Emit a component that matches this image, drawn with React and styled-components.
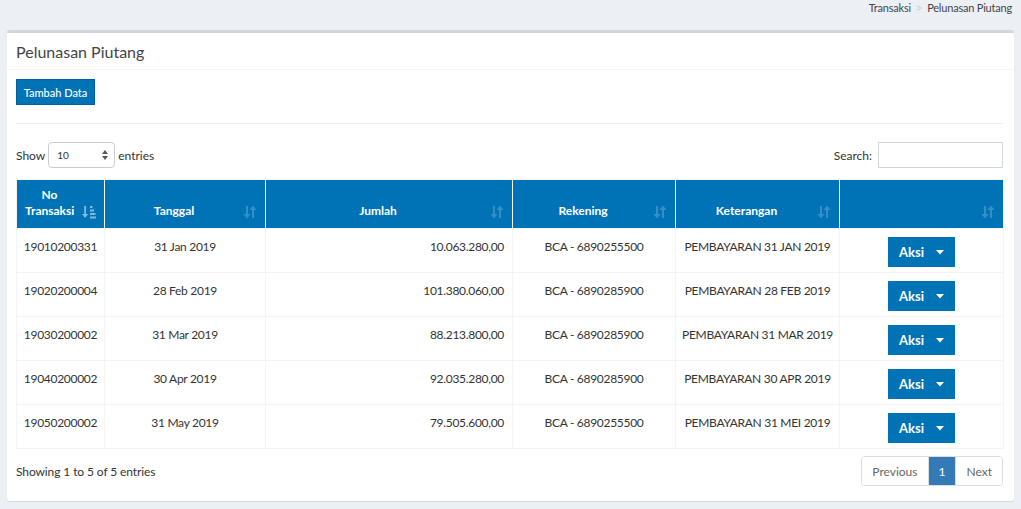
import React from 'react';
import styled, { createGlobalStyle } from 'styled-components';

const GlobalStyle = createGlobalStyle`
  html, body {
    margin: 0;
    padding: 0;
    background: #ecf0f5;
    font-family: Lato, "Noto Sans", sans-serif;
    font-size: 13px;
    color: #333;
  }
  * { box-sizing: border-box; }
`;

const rows = [
  { no: '19010200331', tanggal: '31 Jan 2019', jumlah: '10.063.280,00', rekening: 'BCA - 6890255500', ket: 'PEMBAYARAN 31 JAN 2019' },
  { no: '19020200004', tanggal: '28 Feb 2019', jumlah: '101.380.060,00', rekening: 'BCA - 6890285900', ket: 'PEMBAYARAN 28 FEB 2019' },
  { no: '19030200002', tanggal: '31 Mar 2019', jumlah: '88.213.800,00', rekening: 'BCA - 6890285900', ket: 'PEMBAYARAN 31 MAR 2019' },
  { no: '19040200002', tanggal: '30 Apr 2019', jumlah: '92.035.280,00', rekening: 'BCA - 6890285900', ket: 'PEMBAYARAN 30 APR 2019' },
  { no: '19050200002', tanggal: '31 May 2019', jumlah: '79.505.600,00', rekening: 'BCA - 6890255500', ket: 'PEMBAYARAN 31 MEI 2019' },
];

const columns = [
  { label: 'No Transaksi', width: 88, sorted: true },
  { label: 'Tanggal', width: 161 },
  { label: 'Jumlah', width: 247 },
  { label: 'Rekening', width: 163 },
  { label: 'Keterangan', width: 164 },
  { label: '', width: 164 },
];

const SortIcon = ({ sorted }) => (
  <SortMark sorted={sorted}>
    {sorted ? (
      <svg width="14" height="14" viewBox="0 0 14 14" fill="#fff">
        <rect x="2.2" y="1" width="1.8" height="9" />
        <path d="M0 9h6.2l-3.1 4z" />
        <rect x="8" y="1" width="2.5" height="2" />
        <rect x="8" y="4.5" width="4" height="2" />
        <rect x="8" y="8" width="5.5" height="2" />
        <rect x="8" y="11.5" width="6" height="2" />
      </svg>
    ) : (
      <svg width="14" height="14" viewBox="0 0 14 14" fill="#fff">
        <rect x="3" y="1" width="2" height="9" />
        <path d="M0.5 9h7l-3.5 4.5z" />
        <rect x="9" y="4" width="2" height="9" />
        <path d="M6.5 5h7l-3.5-4.5z" />
      </svg>
    )}
  </SortMark>
);

const Caret = () => (
  <svg width="8" height="5" viewBox="0 0 8 5" fill="#fff">
    <path d="M0 0h8L4 4.5z" />
  </svg>
);

const SelectArrows = () => (
  <svg width="6" height="10" viewBox="0 0 6 10" fill="#555">
    <path d="M3 0l3 4H0z" />
    <path d="M3 10l3-4H0z" />
  </svg>
);

export default function App() {
  return (
    <Page>
      <GlobalStyle />
      <Breadcrumb>
        <span>Transaksi</span>
        <Sep>&gt;</Sep>
        <span>Pelunasan Piutang</span>
      </Breadcrumb>
      <Box>
        <BoxHeader>
          <BoxTitle>Pelunasan Piutang</BoxTitle>
        </BoxHeader>
        <BoxBody>
          <PrimaryButton>Tambah Data</PrimaryButton>
          <Rule />
          <Controls>
            <Label>
              Show
              <Select>
                <span>10</span>
                <SelectArrows />
              </Select>
              entries
            </Label>
            <Label>
              Search:
              <SearchInput />
            </Label>
          </Controls>
          <Table>
            <colgroup>
              {columns.map((c, i) => (
                <col key={i} style={{ width: c.width }} />
              ))}
            </colgroup>
            <thead>
              <tr>
                {columns.map((c, i) => (
                  <Th key={i}>
                    {c.label === 'No Transaksi' ? (
                      <>No<br />Transaksi</>
                    ) : (
                      c.label
                    )}
                    <SortIcon sorted={c.sorted} />
                  </Th>
                ))}
              </tr>
            </thead>
            <tbody>
              {rows.map((r) => (
                <tr key={r.no}>
                  <Td>{r.no}</Td>
                  <Td>{r.tanggal}</Td>
                  <Td align="right">{r.jumlah}</Td>
                  <Td>{r.rekening}</Td>
                  <Td>{r.ket}</Td>
                  <Td>
                    <ActionButton>
                      <span>Aksi</span>
                      <Caret />
                    </ActionButton>
                  </Td>
                </tr>
              ))}
            </tbody>
          </Table>
          <Footer>
            <Info>Showing 1 to 5 of 5 entries</Info>
            <Pagination>
              <PageItem>Previous</PageItem>
              <PageItem active>1</PageItem>
              <PageItem>Next</PageItem>
            </Pagination>
          </Footer>
        </BoxBody>
      </Box>
    </Page>
  );
}

const Page = styled.div`
  min-height: 509px;
  padding: 0 7px;
`;

const Breadcrumb = styled.div`
  height: 30px;
  display: flex;
  justify-content: flex-end;
  align-items: flex-start;
  gap: 5px;
  padding-right: 2px;
  font-size: 11px;
  letter-spacing: -0.2px;
  line-height: 15px;
  color: #444;
`;

const Sep = styled.span`
  color: #ccc;
`;

const Box = styled.div`
  background: #fff;
  border-top: 3px solid #d2d6de;
  border-radius: 3px;
  box-shadow: 0 1px 1px rgba(0, 0, 0, 0.1);
`;

const BoxHeader = styled.div`
  height: 37px;
  display: flex;
  align-items: center;
  padding: 0 9px;
  border-bottom: 1px solid #f4f4f4;
`;

const BoxTitle = styled.h3`
  margin: 0;
  font-size: 16px;
  font-weight: 400;
  color: #444;
`;

const BoxBody = styled.div`
  padding: 9px 11px 15px 9px;
`;

const PrimaryButton = styled.button`
  display: block;
  height: 26px;
  width: 79px;
  padding: 0;
  border: 1px solid #005f96;
  background: #0073b7;
  color: #fff;
  font-family: inherit;
  font-size: 11px;
  font-weight: 500;
`;

const Rule = styled.hr`
  margin: 18px 0 18px;
  border: 0;
  border-top: 1px solid #eee;
`;

const Controls = styled.div`
  display: flex;
  justify-content: space-between;
  align-items: center;
  height: 26px;
  margin-bottom: 11px;
`;

const Label = styled.label`
  display: flex;
  align-items: center;
  gap: 3px;
  font-size: 12px;
  color: #333;
`;

const Select = styled.div`
  width: 67px;
  height: 26px;
  border: 1px solid #ccc;
  border-radius: 4px;
  display: flex;
  align-items: center;
  justify-content: space-between;
  padding: 0 6px 0 8px;
  font-size: 10px;
  color: #333;
`;

const SearchInput = styled.div`
  width: 125px;
  height: 26px;
  border: 1px solid #d2d6de;
  margin-left: 3px;
`;

const Table = styled.table`
  width: 100%;
  table-layout: fixed;
  border-collapse: collapse;
  border: 1px solid #f4f4f4;
`;

const Th = styled.th`
  position: relative;
  background: #0073b7;
  color: #fff;
  font-size: 12px;
  font-weight: 700;
  line-height: 16px;
  text-align: center;
  vertical-align: bottom;
  padding: 7px 30px 9px 8px;
  border-left: 1px solid #fff;
  &:first-child { border-left: 0; }
`;

const SortMark = styled.span`
  position: absolute;
  right: 8px;
  bottom: 9px;
  display: flex;
  opacity: ${(p) => (p.sorted ? 0.5 : 0.2)};
`;

const Td = styled.td`
  border: 1px solid #f4f4f4;
  padding: 8px 6px 5px;
  line-height: 20px;
  font-size: 12px;
  letter-spacing: -0.3px;
  white-space: nowrap;
  text-align: ${(p) => p.align || 'center'};
  vertical-align: top;
  color: #333;
  &:nth-child(3) { padding-right: 8px; }
`;

const ActionButton = styled.div`
  display: inline-flex;
  align-items: center;
  justify-content: space-between;
  width: 67px;
  height: 30px;
  padding: 0 11px;
  background: #0073b7;
  color: #fff;
  font-size: 13px;
  font-weight: 700;
  letter-spacing: 0;
  vertical-align: top;
`;

const Footer = styled.div`
  display: flex;
  justify-content: space-between;
  align-items: center;
  margin-top: 7px;
`;

const Info = styled.div`
  font-size: 12px;
  letter-spacing: -0.1px;
  color: #333;
`;

const Pagination = styled.div`
  display: flex;
  border: 1px solid #ddd;
  border-radius: 4px;
  overflow: hidden;
`;

const PageItem = styled.div`
  height: 28px;
  display: flex;
  align-items: center;
  padding: 0 10px;
  font-size: 12px;
  color: ${(p) => (p.active ? '#fff' : '#666')};
  background: ${(p) => (p.active ? '#337ab7' : '#fff')};
  & + & { border-left: 1px solid #ddd; }
`;
